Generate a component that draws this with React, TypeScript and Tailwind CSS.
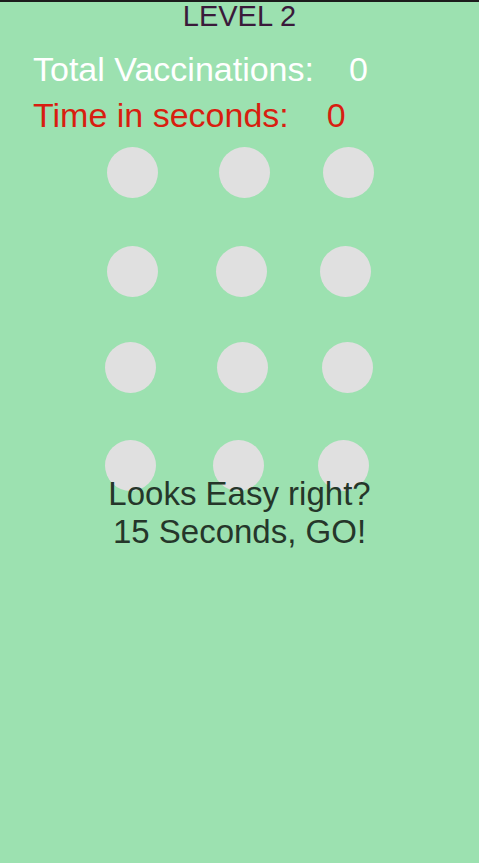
import React from "react";

const dots = [
  { x: 107, y: 147 },
  { x: 219, y: 147 },
  { x: 323, y: 147 },
  { x: 107, y: 246 },
  { x: 216, y: 246 },
  { x: 320, y: 246 },
  { x: 105, y: 342 },
  { x: 217, y: 342 },
  { x: 322, y: 342 },
  { x: 105, y: 440 },
  { x: 213, y: 440 },
  { x: 318, y: 440 },
];

export default function App() {
  return (
    <div
      className="relative min-h-screen w-full overflow-hidden bg-[#9ce1b0] border-t-2 border-[#1c1c1c]"
      style={{ fontFamily: '"Liberation Sans", Arial, sans-serif' }}
    >
      {dots.map((d, i) => (
        <div
          key={i}
          className="absolute h-[51px] w-[51px] rounded-full bg-[#e0e0e0]"
          style={{ left: d.x, top: d.y - 2 }}
        />
      ))}

      <div className="relative z-10">
        <div className="text-center text-[29px] leading-[29px] text-[#3a1a3a]">LEVEL 2</div>

        <div className="mt-[15px] pl-[33px] text-[34px] leading-[46px]">
          <div className="flex text-white">
            <span>Total Vaccinations:</span>
            <span className="ml-[35px]">0</span>
          </div>
          <div className="flex text-[#d81e10]">
            <span>Time in seconds:</span>
            <span className="ml-[38px]">0</span>
          </div>
        </div>

        <div className="mt-[337px] text-center text-[33px] leading-[38px] text-[#25362a]">
          <div>Looks Easy right?</div>
          <div>15 Seconds, GO!</div>
        </div>
      </div>
    </div>
  );
}
